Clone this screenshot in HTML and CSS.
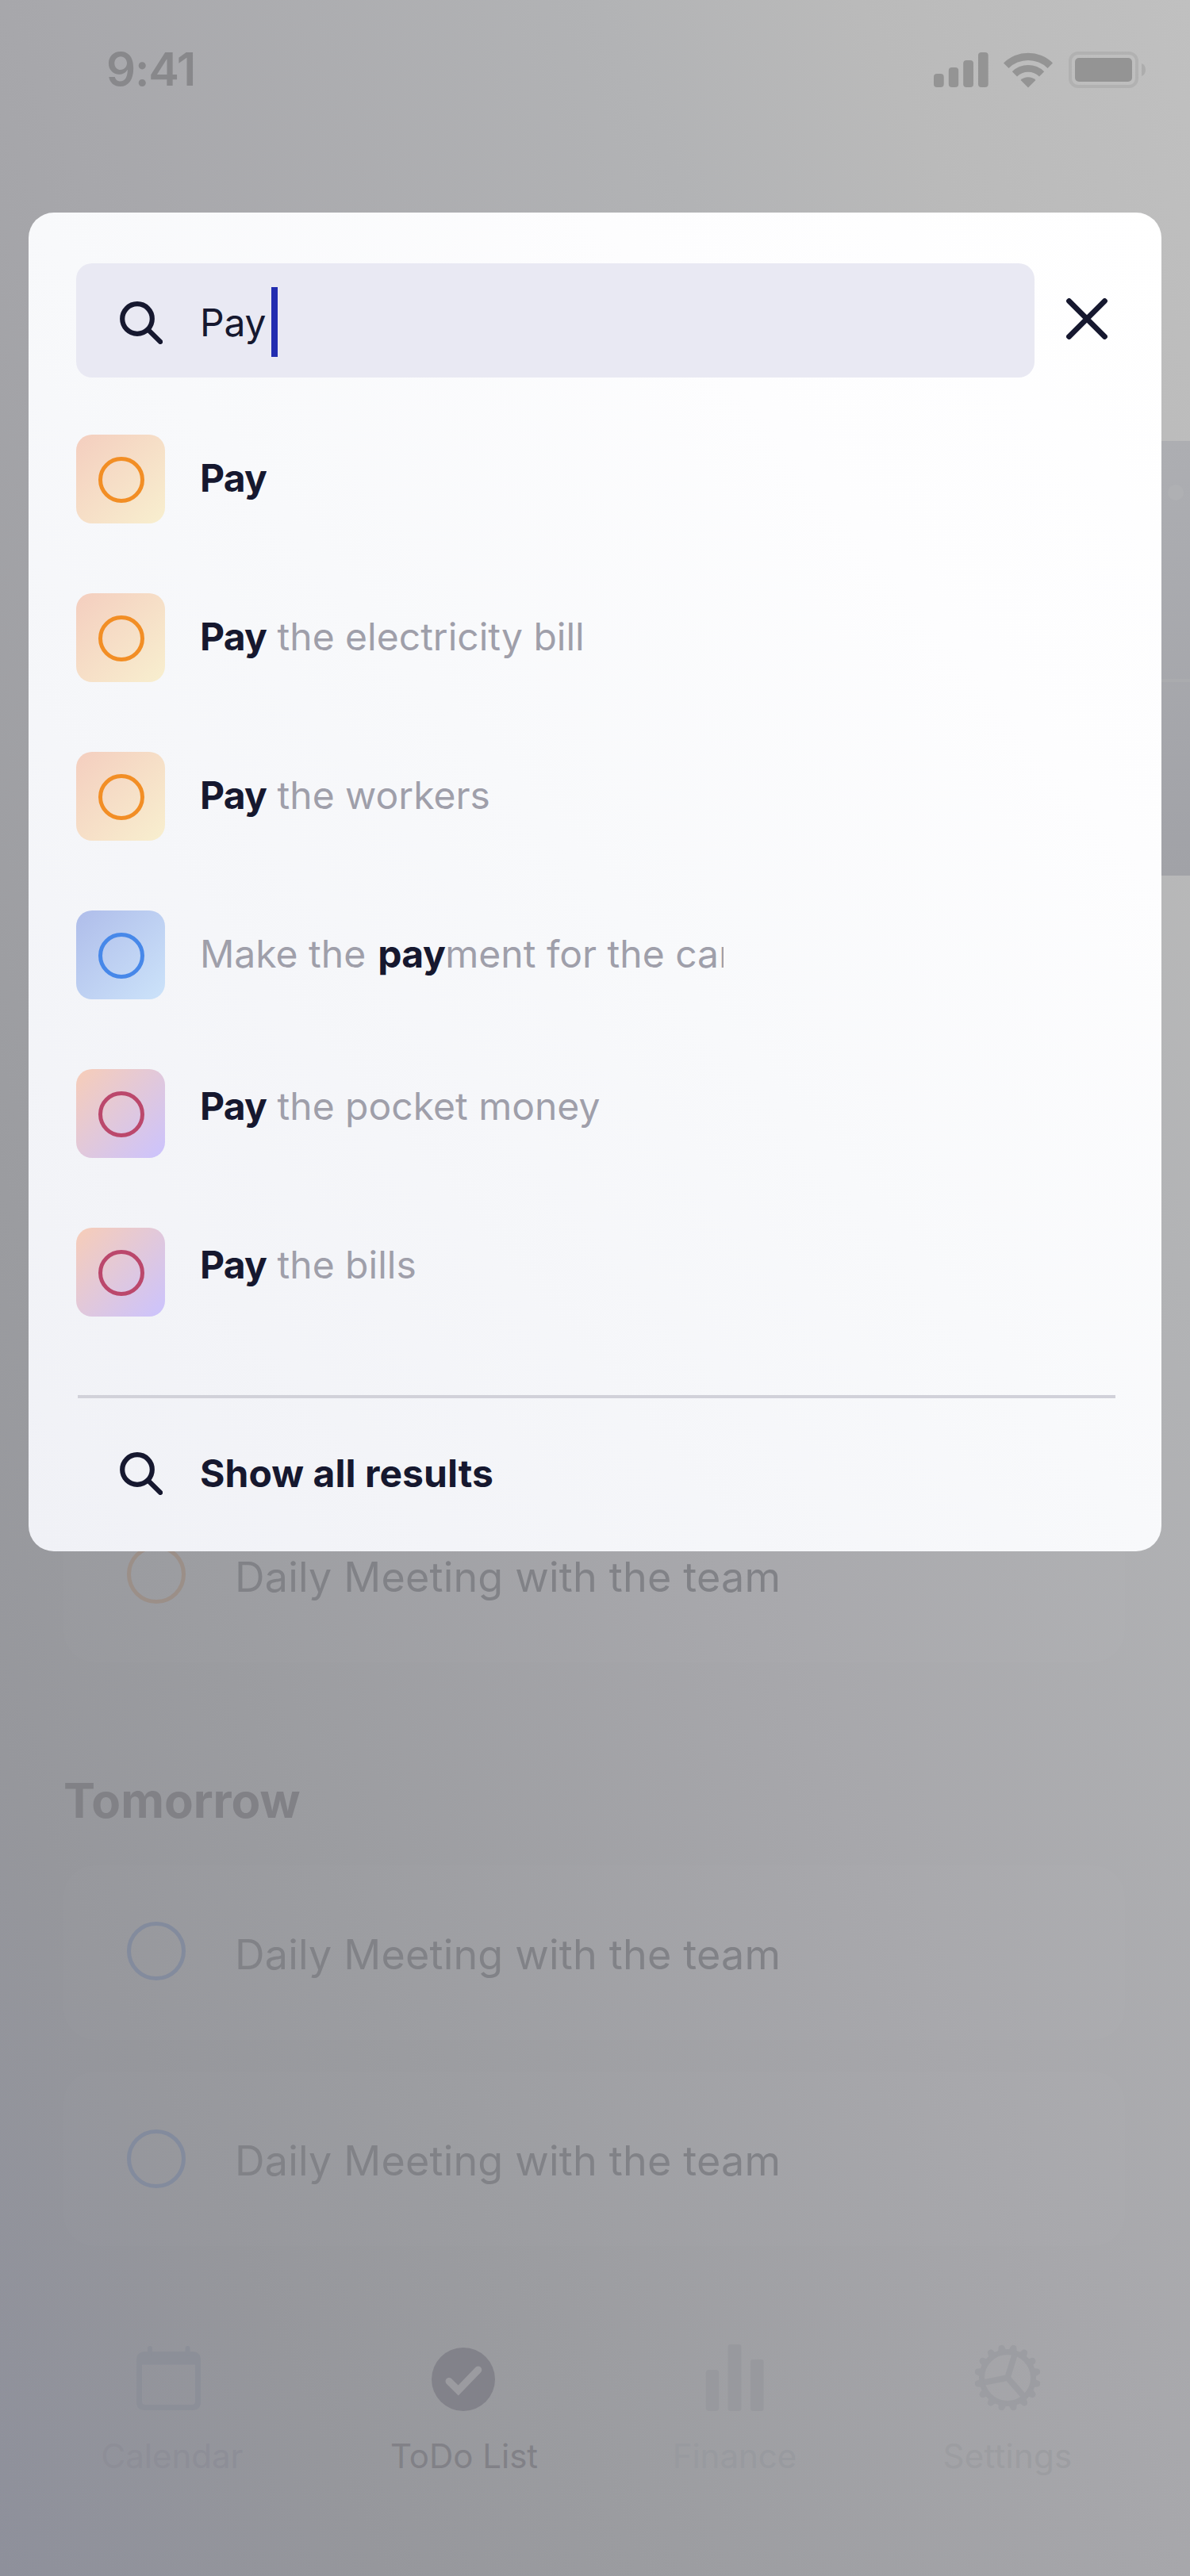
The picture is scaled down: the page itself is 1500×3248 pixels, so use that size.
FILE: index.html
```html
<!DOCTYPE html>
<html lang="en">
<head>
<meta charset="utf-8">
<title>ToDo List – Search</title>
<link rel="stylesheet" href="styles.css">
</head>
<body>
<svg class="defs" aria-hidden="true">
  <symbol id="search" viewBox="0 0 54 54">
    <circle cx="22" cy="22" r="18.8" fill="none" stroke="currentColor" stroke-width="6.2"/>
    <path d="M36 36L51.2 51" fill="none" stroke="currentColor" stroke-width="6" stroke-linecap="round"/>
  </symbol>
  <symbol id="tooth" viewBox="-42 -42 84 84">
    <path d="M-8 -31Q-5 -33 -3.9 -39Q-3 -42 0 -42Q3 -42 3.9 -39Q5 -33 8 -31Z"/>
  </symbol>
</svg>

<div class="screen">
  <header class="status">
    <span class="clock">9:41</span>
    <div class="indicators">
      <svg width="69" height="44" viewBox="0 0 69 44"><rect y="27" width="12.7" height="17" rx="4"/><rect x="18.8" y="19" width="12.4" height="25" rx="4"/><rect x="37.2" y="10" width="12.8" height="34" rx="4"/><rect x="56" width="12.7" height="44" rx="4"/></svg>
      <svg class="wifi" width="62" height="46" viewBox="0 0 62 46">
        <path d="M0 14.5A44 44 0 0 1 62 14.5L55.5 21A35 35 0 0 0 6.5 21Z"/>
        <path d="M10.8 25.3A28.6 28.6 0 0 1 51.2 25.3L45 31.5A20 20 0 0 0 17 31.5Z"/>
        <path d="M21.5 36A14 14 0 0 1 40.5 36L31 45.5Z"/>
      </svg>
      <svg class="battery" width="98" height="46" viewBox="0 0 98 46"><rect x="2" y="2" width="84" height="42" rx="10" fill="none" stroke="currentColor" stroke-width="4" opacity=".3"/><rect x="8" y="8" width="72" height="30" rx="5"/><path d="M92 15Q97 17 97 23Q97 29 92 31Z" opacity=".4"/></svg>
    </div>
  </header>

  <section class="peek"><span class="dot"></span><span class="rule"></span></section>

  <main class="tasks">
    <article class="task"><span class="ring orange"></span><span>Daily Meeting with the team</span></article>
    <h2>Tomorrow</h2>
    <article class="task"><span class="ring"></span><span>Daily Meeting with the team</span></article>
    <article class="task"><span class="ring low"></span><span>Daily Meeting with the team</span></article>
  </main>

  <nav class="tabs">
    <a class="tab faint">
      <svg class="calendar" width="84" height="84" viewBox="0 0 84 84"><path fill-rule="evenodd" d="M13 9H71Q82 9 82 20V72Q82 83 71 83H12Q1 83 1 72V20Q1 9 13 9ZM8 25.5V72Q8 76 12 76H71Q75 76 75 72V25.5Z"/><rect x="15" y="2" width="6" height="12" rx="3"/><rect x="62.5" y="2" width="6" height="12" rx="3"/></svg>
      <span>Calendar</span>
    </a>
    <a class="tab active">
      <svg width="84" height="84" viewBox="0 0 84 84"><circle cx="42" cy="44" r="40"/><path class="check" d="M24 46.5L35.7 58L60.8 32"/></svg>
      <span>ToDo List</span>
    </a>
    <a class="tab">
      <svg width="84" height="84" viewBox="0 0 84 84"><rect x="5.8" y="32" width="16.4" height="52" rx="4"/><rect x="33.5" width="17" height="84" rx="3"/><rect x="62" y="19" width="16.6" height="65" rx="3"/></svg>
      <span>Finance</span>
    </a>
    <a class="tab light">
      <svg width="84" height="84" viewBox="-42 -42 84 84">
        <circle r="32.5" fill="none" stroke="currentColor" stroke-width="7"/>
        <g class="spokes"><path d="M0 0L9.3 -30M0 0L-30 6M0 0L21 24"/></g>
        <g id="quarter"><use href="#tooth" x="-42" y="-42" width="84" height="84" transform="rotate(11.25)"/><use href="#tooth" x="-42" y="-42" width="84" height="84" transform="rotate(33.75)"/><use href="#tooth" x="-42" y="-42" width="84" height="84" transform="rotate(56.25)"/><use href="#tooth" x="-42" y="-42" width="84" height="84" transform="rotate(78.75)"/></g>
        <use href="#quarter" transform="rotate(90)"/><use href="#quarter" transform="rotate(180)"/><use href="#quarter" transform="rotate(270)"/>
      </svg>
      <span>Settings</span>
    </a>
  </nav>

  <div class="modal" role="dialog">
    <div class="search-row">
      <div class="bar field"><svg class="glass"><use href="#search"/></svg><span class="query">Pay</span><span class="caret"></span></div>
      <svg class="close" width="52" height="52" viewBox="0 0 52 52"><path d="M3.6 3.6L48.4 48.4M48.4 3.6L3.6 48.4"/></svg>
    </div>
    <ul class="results">
      <li><span class="tile amber"></span><span class="label"><b>Pay</b></span></li>
      <li><span class="tile amber"></span><span class="label"><b>Pay</b> the electricity bill</span></li>
      <li><span class="tile amber"></span><span class="label"><b>Pay</b> the workers</span></li>
      <li><span class="tile blue"></span><span class="label">Make the <b class="inner">pay</b>ment for the car</span></li>
      <li><span class="tile rose"></span><span class="label raised"><b>Pay</b> the pocket money</span></li>
      <li><span class="tile rose"></span><span class="label raised"><b>Pay</b> the bills</span></li>
    </ul>
    <hr>
    <div class="bar more"><svg class="glass"><use href="#search"/></svg><span>Show all results</span></div>
  </div>
</div>
</body>
</html>
```
FILE: styles.css
```css
*, *::after { box-sizing: border-box; }
body { margin: 0; font-family: Inter, "Liberation Sans", sans-serif; color: #16182f; }
.defs { position: absolute; width: 0; height: 0; }
svg { display: block; fill: currentColor; flex: none; }

.screen {
  position: relative;
  width: 1500px;
  height: 3248px;
  overflow: hidden;
  background: linear-gradient(to top right, #8e909b 0%, #96979c 16%, #9b9ca0 27%, #a7a7ab 50%, #b2b3b5 75%, #bababa 86%, #c0c0c0 100%);
}

/* status bar */
.status { display: flex; justify-content: space-between; height: 556px; padding: 52px 55px 0 134px; }
.clock { font-size: 58px; font-weight: 600; line-height: 70px; letter-spacing: -1.2px; color: #88888b; }
.indicators { display: flex; padding-top: 14px; color: #949494; }
.wifi { margin: -1px 0 0 19px; }
.battery { margin: -1px 0 0 20px; }

/* panel reaching past the right edge of the dialog */
.peek { display: flex; flex-direction: column; width: 60px; height: 548px; margin-left: auto; padding: 55px 0 0 32px; background: linear-gradient(#adaeb2, #a1a2a7); }
.dot { width: 20px; height: 20px; border-radius: 50%; background: #afb0b3; }
.rule { height: 4px; margin-top: 225px; margin-left: -32px; background: #aaabae; }

/* task list */
.tasks { display: flex; flex-direction: column; gap: 40px; padding: 772px 82px 0 80px; }
.task { display: flex; align-items: center; height: 220px; padding-left: 80px; border-radius: 40px; background: rgba(255, 255, 255, .016); font-size: 52px; letter-spacing: .2px; line-height: 64px; color: #818287; }
.task span:last-child { padding-top: 6px; margin-left: 62px; }
.ring { width: 74px; height: 74px; margin-bottom: 5px; border: 5px solid #838b9d; border-radius: 50%; }
.ring.orange { margin-bottom: 3px; border-color: #9b8f88; }
.ring.low { margin-bottom: 0; }
h2 { margin: 95px 0 3px 0; font-size: 60px; font-weight: 700; line-height: 78px; color: #818186; }

/* tab bar */
.tabs { display: grid; grid-template-columns: 366px 368px 316px 372px; padding: 124px 0 0 34px; }
.tab { display: flex; flex-direction: column; align-items: center; font-size: 42px; line-height: 50px; }
.tab svg { color: #98999e; }
.tab span { margin-top: 32px; color: #989a9f; }
.tab.faint svg { color: #8c8f98; }
.tab.faint span { color: #8d8e97; }
.tab.active svg { color: #82828a; }
.tab.active span { padding-left: 2px; color: #818187; }
.tab.light svg { color: #9c9da2; }
.tab.light span { letter-spacing: .3px; color: #9c9da1; }
.calendar { margin-left: -9px; }
.check { fill: none; stroke: #9b9ba0; stroke-width: 9; stroke-linecap: round; }
.spokes { fill: none; stroke: currentColor; stroke-width: 7.5; }

/* search dialog */
.modal { position: absolute; top: 268px; left: 36px; width: 1428px; height: 1688px; padding: 64px 60px 0; border-radius: 32px; background: linear-gradient(to top right, #f0f1f6 0%, #f8f9fb 50%, #fdfdfe 75%, #fff 100%); }
.search-row { display: flex; align-items: center; gap: 40px; }
.bar { display: flex; align-items: center; height: 144px; padding-left: 55px; font-size: 48px; line-height: 58px; }
.field { width: 1208px; border-radius: 20px; background: #e9e9f3; }
.glass { width: 54px; height: 54px; margin: 6px 47px 0 0; }
.query { padding-top: 5px; letter-spacing: -.2px; }
.caret { width: 8px; height: 88px; margin: 4px 0 0 6.6px; background: #222db0; }
.close { margin-top: -4px; fill: none; stroke: currentColor; stroke-width: 7; stroke-linecap: round; }

.results { display: grid; grid-auto-rows: 112px; row-gap: 88px; margin: 72px 0 0; padding: 0; list-style: none; }
.results li { display: flex; }
.tile { display: grid; place-items: center; width: 112px; height: 112px; border-radius: 20px; flex: none; }
.tile::after { content: ""; width: 58px; height: 58px; margin: 2px 0 0 2px; border: 5px solid; border-radius: 50%; }
.amber { color: #f28e25; background: linear-gradient(135deg, #f4cebf, #f8efcf); }
.blue { color: #4788e9; background: linear-gradient(135deg, #afbdea, #cce3fa); }
.rose { color: #bb486c; background: linear-gradient(135deg, #f7cdb8, #cbc3fe); }
.label { max-width: 660px; margin-left: 44px; padding-bottom: 3px; overflow: hidden; white-space: nowrap; font-size: 48px; line-height: 109px; color: #9f9faa; }
.label b { font-weight: 700; letter-spacing: -.8px; color: #16182f; }
.label .inner { margin-left: 1.5px; letter-spacing: -.5px; }
.raised { line-height: 93px; }

hr { width: 1308px; height: 4px; margin: 99px 0 20px 2px; border: 0; background: #d1d1d9; }
.more { font-weight: 700; }
.more span { padding-top: 5px; letter-spacing: .05px; }
```
